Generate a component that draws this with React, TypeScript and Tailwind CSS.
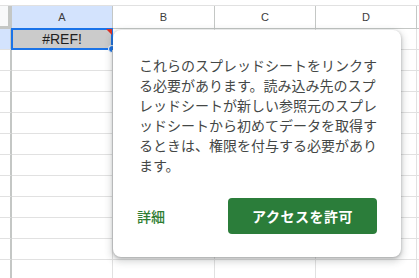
import React from 'react';

const cols = [
  { name: 'A', w: 'w-[101px]' },
  { name: 'B', w: 'w-[102px]' },
  { name: 'C', w: 'w-[101px]' },
  { name: 'D', w: 'w-[101px]' },
];

const lines = [
  'これらのスプレッドシートをリンクす',
  'る必要があります。読み込み先のスプ',
  'レッドシートが新しい参照元のスプレ',
  'ッドシートから初めてデータを取得す',
  'るときは、権限を付与する必要があり',
  'ます。',
];

export default function App() {
  const rows = Array.from({ length: 12 }, (_, i) => i);

  return (
    <div className="relative w-[419px] h-[278px] overflow-hidden bg-white font-['Liberation_Sans',Arial,sans-serif]">
      {/* strip above the column headers */}
      <div className="h-[6px] border-b border-[#e1e1e1]" />

      {/* column headers */}
      <div className="flex h-[23px]">
        <div className="w-[12px] shrink-0 bg-[#f8f9fa] border-r-[4px] border-b-[3px] border-[#c4c7c5]" />
        {cols.map(c => (
          <div
            key={c.name}
            className={`${c.w} shrink-0 flex items-center justify-center text-[11px] text-[#3c3c3c] border-r border-b border-[#c4c7c5] ${
              c.name === 'A' ? 'bg-[#d3e3fd]' : 'bg-white'
            }`}
          >
            {c.name}
          </div>
        ))}
        <div className="flex-1 border-b border-[#c4c7c5]" />
      </div>

      {/* grid rows */}
      {rows.map(r => (
        <div key={r} className="flex h-[21px]">
          <div
            className={`w-[12px] shrink-0 border-r-2 border-b border-r-[#c4c7c5] border-b-[#e1e1e1] ${
              r === 0 ? 'bg-[#d3e3fd]' : 'bg-white'
            }`}
          />
          {cols.map(c => (
            <div key={c.name} className={`${c.w} shrink-0 border-r border-b border-[#e1e1e1] relative`}>
              {r === 0 && c.name === 'A' && (
                <>
                  <div className="absolute inset-0 bg-[#cbcbcb] flex items-center justify-center text-[14px] text-[#1f1f1f]">
                    #REF!
                  </div>
                  <div className="absolute -left-px -top-px -right-px -bottom-px border-2 border-[#1a73e8]" />
                  <div className="absolute right-0 top-0 w-0 h-0 border-l-[6px] border-l-transparent border-t-[6px] border-t-[#d93025]" />
                  <div className="absolute -right-[4px] -bottom-[4px] w-[8px] h-[8px] rounded-full bg-[#1a73e8] border border-white" />
                  <div className="absolute -right-[2px] top-[22px] w-[2px] h-[8px] bg-[#188038]" />
                </>
              )}
            </div>
          ))}
          <div className="flex-1 border-b border-[#e1e1e1]" />
        </div>
      ))}

      {/* access popup */}
      <div className="absolute left-[113px] top-[30px] w-[288px] h-[227px] bg-white rounded-lg shadow-[0_3px_7px_2px_rgba(60,64,67,0.2),0_1px_3px_rgba(60,64,67,0.35)] pl-[26px] pr-[24px] pt-[25px] pb-[23px] flex flex-col font-['Noto_Sans_CJK_JP','Noto_Sans',sans-serif]">
        <p className="text-[14px] leading-[20px] text-[#444746] whitespace-nowrap">
          {lines.map((l, i) => (
            <React.Fragment key={i}>
              {l}
              {i < lines.length - 1 && <br />}
            </React.Fragment>
          ))}
        </p>
        <div className="mt-auto flex items-center justify-between">
          <button className="text-[14px] font-medium text-[#2e7d32] -ml-[2px]">詳細</button>
          <button className="w-[149px] h-[36px] rounded bg-[#2b7d3a] text-white text-[14px] font-bold tracking-[0.5px]">
            アクセスを許可
          </button>
        </div>
      </div>
    </div>
  );
}
